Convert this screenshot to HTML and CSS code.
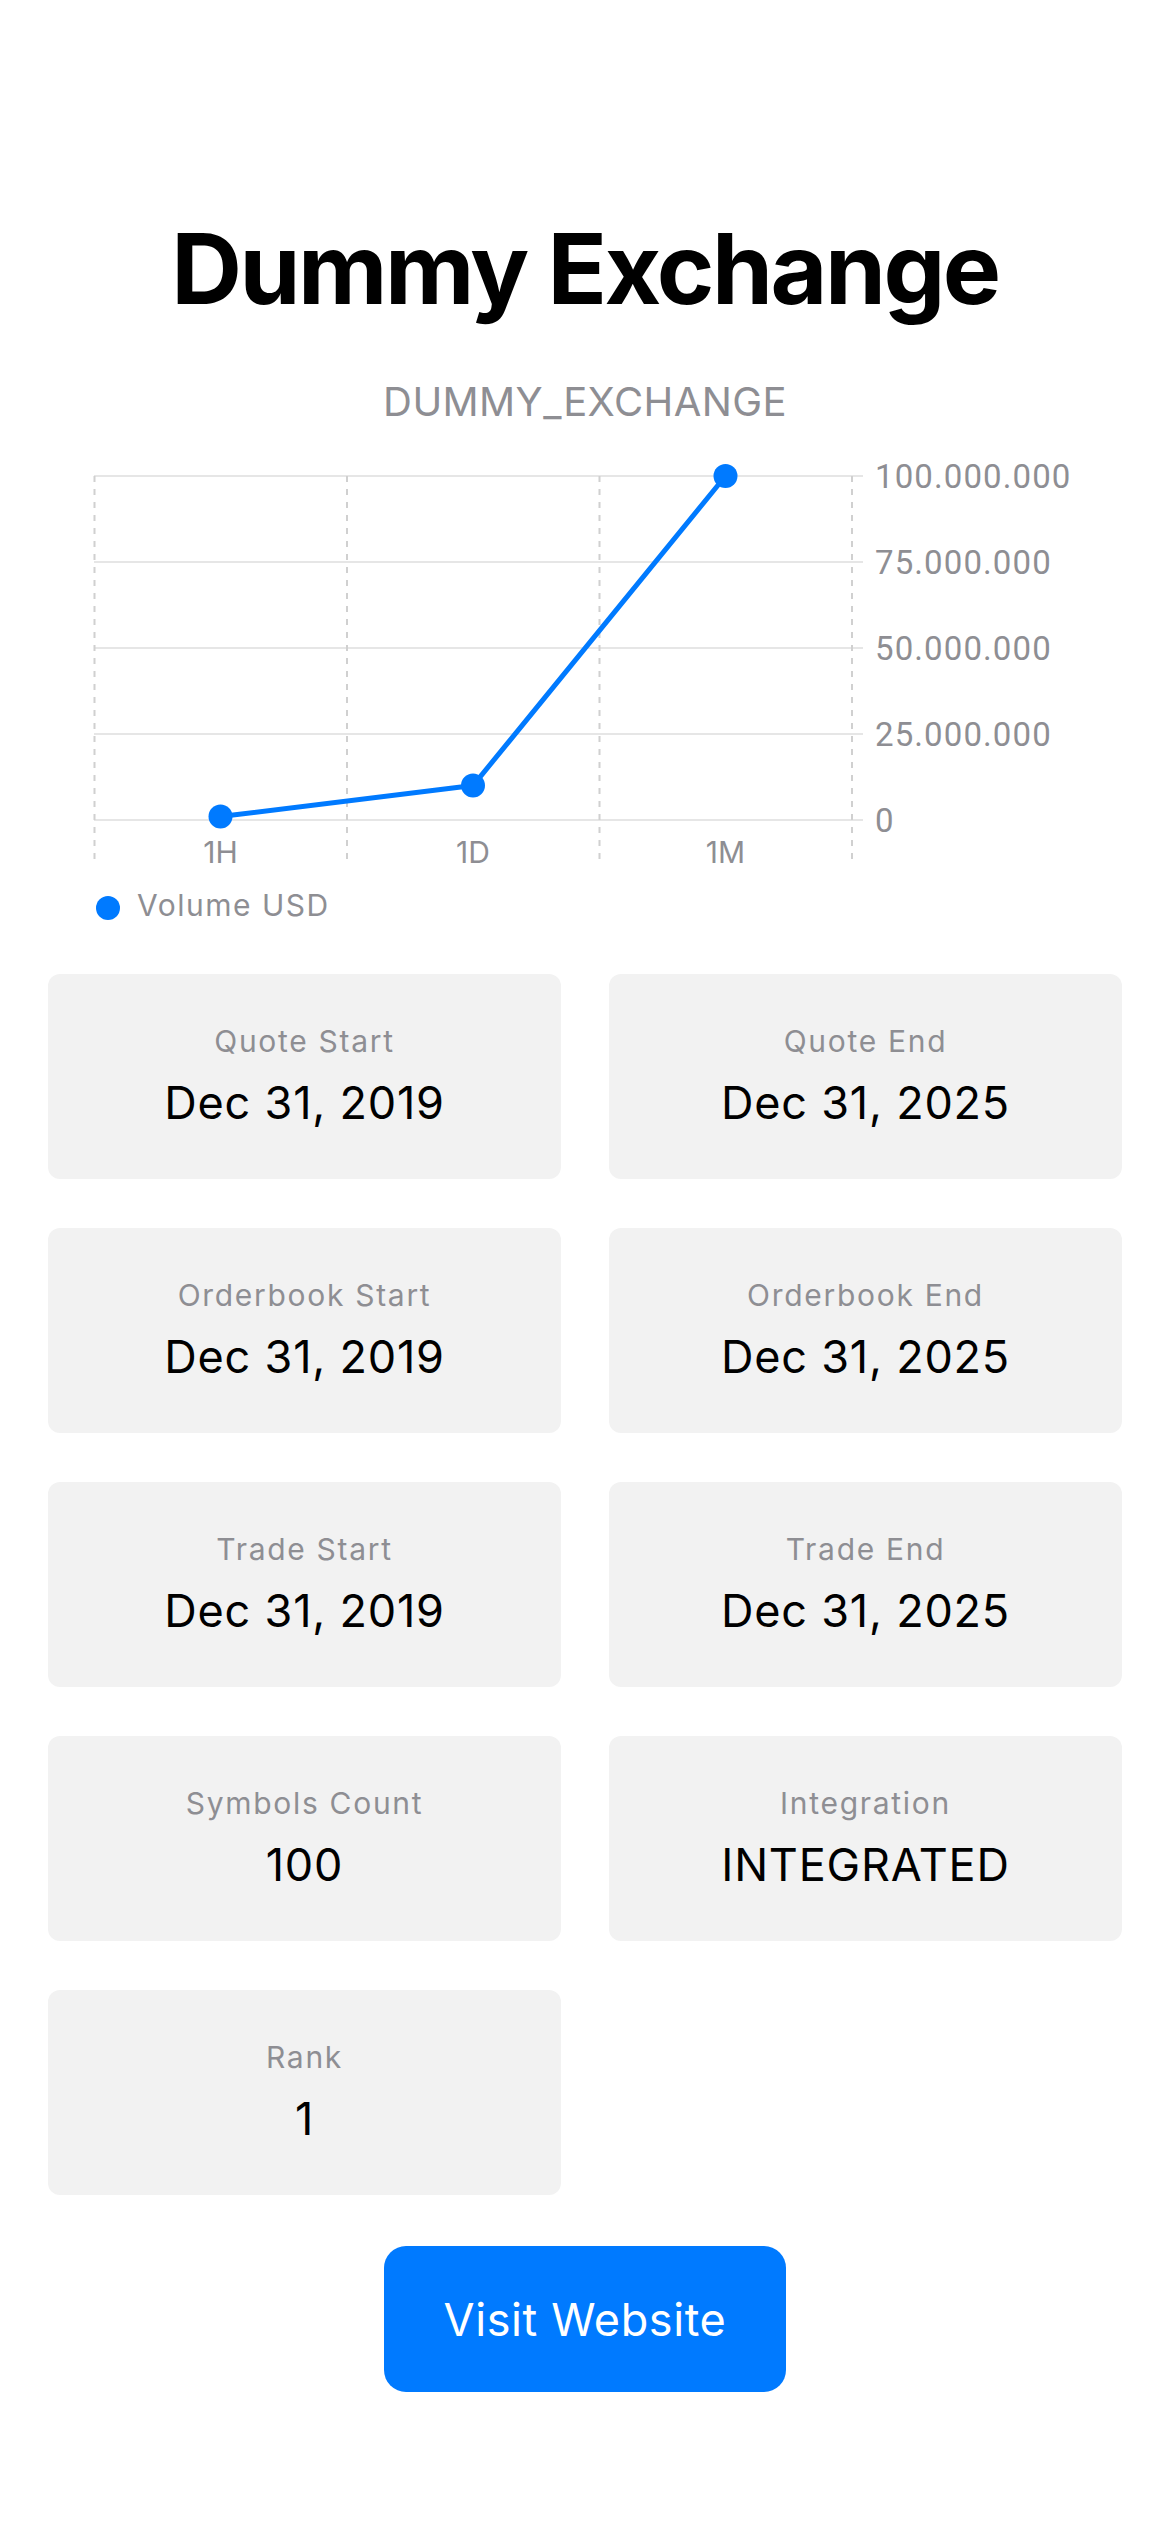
FILE: index.html
```html
<!DOCTYPE html>
<html lang="en">
<head>
<meta charset="utf-8">
<title>Dummy Exchange</title>
<link rel="stylesheet" href="styles.css">
</head>
<body>
<main class="page">
  <header class="header">
    <h1 class="title">Dummy Exchange</h1>
    <p class="subtitle">DUMMY_EXCHANGE</p>
  </header>

  <section class="chart">
    <svg class="chart-svg" width="1170" height="420" viewBox="0 0 1170 420" xmlns="http://www.w3.org/2000/svg">
      <g class="grid-h">
        <line x1="94" y1="20" x2="863" y2="20"/>
        <line x1="94" y1="106" x2="863" y2="106"/>
        <line x1="94" y1="192" x2="863" y2="192"/>
        <line x1="94" y1="278" x2="863" y2="278"/>
        <line x1="94" y1="364" x2="863" y2="364"/>
      </g>
      <g class="grid-v">
        <line x1="94.5" y1="20" x2="94.5" y2="410"/>
        <line x1="347" y1="20" x2="347" y2="410"/>
        <line x1="599.5" y1="20" x2="599.5" y2="410"/>
        <line x1="852" y1="20" x2="852" y2="410"/>
      </g>
      <g class="y-labels">
        <text x="875" y="31.5">100.000.000</text>
        <text x="875" y="117.5">75.000.000</text>
        <text x="875" y="203.5">50.000.000</text>
        <text x="875" y="289.5">25.000.000</text>
        <text x="875" y="375.5">0</text>
      </g>
      <g class="x-labels">
        <text x="220.5" y="407">1H</text>
        <text x="473" y="407">1D</text>
        <text x="725.5" y="407">1M</text>
      </g>
      <polyline class="series" points="220.5,360.6 473,329.6 725.5,20"/>
      <g class="points">
        <circle cx="220.5" cy="360.6" r="12"/>
        <circle cx="473" cy="329.6" r="12"/>
        <circle cx="725.5" cy="20" r="12"/>
      </g>
    </svg>
    <div class="legend">
      <span class="legend-dot"></span>
      <span class="legend-text">Volume USD</span>
    </div>
  </section>

  <section class="cards">
    <div class="card"><span class="card-label">Quote Start</span><span class="card-value">Dec 31, 2019</span></div>
    <div class="card"><span class="card-label">Quote End</span><span class="card-value">Dec 31, 2025</span></div>
    <div class="card"><span class="card-label">Orderbook Start</span><span class="card-value">Dec 31, 2019</span></div>
    <div class="card"><span class="card-label">Orderbook End</span><span class="card-value">Dec 31, 2025</span></div>
    <div class="card"><span class="card-label">Trade Start</span><span class="card-value">Dec 31, 2019</span></div>
    <div class="card"><span class="card-label">Trade End</span><span class="card-value">Dec 31, 2025</span></div>
    <div class="card"><span class="card-label">Symbols Count</span><span class="card-value">100</span></div>
    <div class="card"><span class="card-label">Integration</span><span class="card-value">INTEGRATED</span></div>
    <div class="card"><span class="card-label">Rank</span><span class="card-value">1</span></div>
  </section>

  <div class="actions">
    <a class="button" href="#">Visit Website</a>
  </div>
</main>
</body>
</html>
```

FILE: styles.css
```css
* {
  box-sizing: border-box;
}

html, body {
  margin: 0;
  padding: 0;
  background: #ffffff;
}

body {
  font-family: Inter, "Noto Sans", "Liberation Sans", sans-serif;
  color: #000000;
}

.page {
  width: 1170px;
  min-height: 2532px;
  padding-top: 210px;
}

.header {
  display: flex;
  flex-direction: column;
  align-items: center;
}

.title {
  margin: 0;
  font-size: 98px;
  line-height: 118px;
  font-weight: 700;
  letter-spacing: -2.5px;
}

.subtitle {
  margin: 49.5px 0 0;
  font-size: 40px;
  line-height: 48px;
  color: #8e8e93;
  font-weight: 400;
  letter-spacing: 0.4px;
}

.chart {
  margin-top: 30.5px;
}

.chart-svg {
  display: block;
}

.grid-h line {
  stroke: #e6e6e6;
  stroke-width: 2;
}

.grid-v line {
  stroke: #d0d0d0;
  stroke-width: 2;
  stroke-dasharray: 6 7;
}

.y-labels text {
  font-family: Roboto, Inter, "Noto Sans", sans-serif;
  font-size: 33px;
  letter-spacing: 1.1px;
  fill: #8e8e93;
}

.x-labels text {
  font-family: Inter, "Noto Sans", sans-serif;
  font-size: 30px;
  fill: #8e8e93;
  text-anchor: middle;
}

.series {
  fill: none;
  stroke: #007aff;
  stroke-width: 5;
  stroke-linejoin: round;
  stroke-linecap: round;
}

.points circle {
  fill: #007aff;
}

.legend {
  display: flex;
  align-items: center;
  gap: 17px;
  margin-top: 8px;
  padding-left: 96px;
  height: 42px;
}

.legend-dot {
  width: 24px;
  height: 24px;
  border-radius: 50%;
  background: #007aff;
  margin-top: 6px;
}

.legend-text {
  font-size: 30px;
  line-height: 42px;
  color: #8e8e93;
  letter-spacing: 1.5px;
}

.cards {
  display: grid;
  grid-template-columns: 1fr 1fr;
  column-gap: 48px;
  row-gap: 49px;
  padding: 0 48px;
  margin-top: 48px;
}

.card {
  height: 205px;
  background: #f2f2f2;
  border-radius: 12px;
  display: flex;
  flex-direction: column;
  align-items: center;
  justify-content: center;
  gap: 17.5px;
}

.card-label {
  font-size: 30px;
  line-height: 36px;
  color: #8e8e93;
  letter-spacing: 1.7px;
}

.card-value {
  font-size: 45px;
  line-height: 54px;
  color: #000000;
  letter-spacing: 0.8px;
}

.actions {
  display: flex;
  justify-content: center;
  margin-top: 51px;
}

.button {
  width: 402px;
  height: 146px;
  border-radius: 22px;
  background: #007aff;
  color: #ffffff;
  text-decoration: none;
  font-size: 45px;
  letter-spacing: 0.6px;
  display: flex;
  align-items: center;
  justify-content: center;
}
```
